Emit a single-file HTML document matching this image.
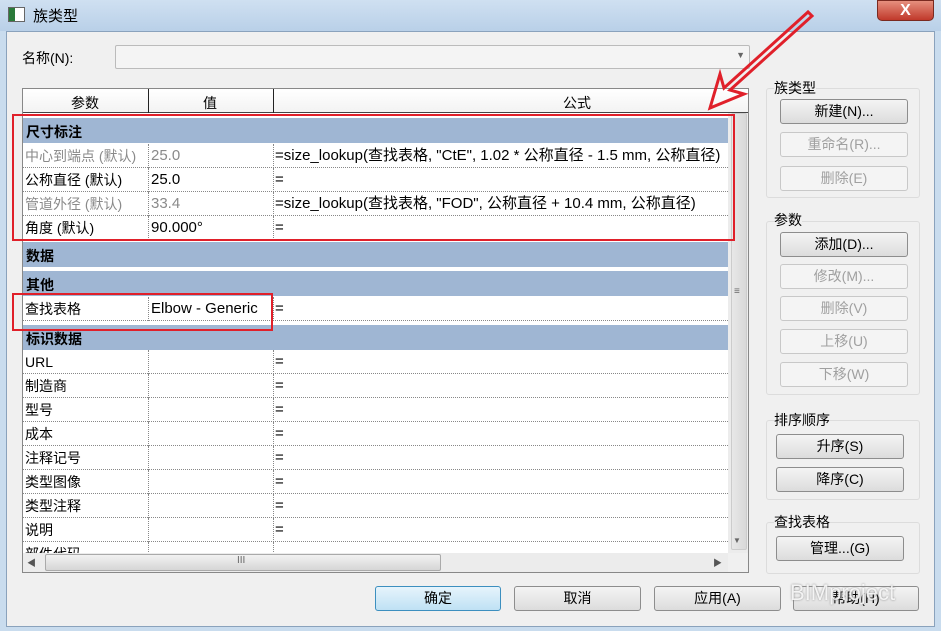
<!DOCTYPE html>
<html><head><meta charset="utf-8"><style>
*{box-sizing:border-box;margin:0;padding:0}
body{width:941px;height:631px;overflow:hidden;background:#c9dcee;font-family:"Liberation Sans","Noto Sans CJK SC",sans-serif;font-size:14px;color:#000;position:relative}
.a{position:absolute}
.title{left:0;top:0;width:941px;height:31px;background:linear-gradient(#cfe0f1,#b9d0e8)}
.body{left:6px;top:31px;width:929px;height:596px;background:#f0f0f0;border:1px solid #8aa2bc}
.btn{position:absolute;height:25px;border:1px solid #8d8d8d;border-radius:3px;background:linear-gradient(#f4f4f4,#dcdcdc);text-align:center;line-height:23px;font-size:14px}
.dis{color:#a0a0a0;border-color:#c8c8c8;background:#f4f4f4}
.grp{position:absolute;border:1px solid #dcdcdc;border-radius:3px}
.lbl{position:absolute;font-size:14px}
.row{position:absolute;left:23px;width:705px;height:24px;background:#fff;border-bottom:1px dotted #888}
.row span{position:absolute;top:2px;height:20px;line-height:20px;font-size:15px;white-space:nowrap;overflow:hidden}
.c1{left:2px;width:122px;font-size:14px!important}.c2{left:128px;width:122px}.c3{left:252px;width:452px}
.row i{position:absolute;top:0;height:24px;border-left:1px dotted #888}
.g{position:absolute;left:23px;width:705px;height:25px;background:#9fb6d3;font-weight:bold;padding:4px 3px;font-size:14px}
.gr{color:#8a8a8a}
</style></head><body>
<div class="a title"></div>
<div class="a" style="left:8px;top:7px;width:17px;height:15px;border:1px solid #666;background:linear-gradient(90deg,#2a7a3a 0 40%,#fff 40%)"></div>
<div class="a" style="left:33px;top:5px;font-size:15px">族类型</div>
<div class="a" style="left:877px;top:0;width:57px;height:21px;border-radius:0 0 5px 5px;background:linear-gradient(#e6907e,#c0392b);border:1px solid #7a2a20;color:#fff;text-align:center;font-weight:bold;font-size:16px;line-height:19px">X</div>
<div class="a body"></div>
<div class="lbl" style="left:22px;top:48px">名称(N):</div>
<div class="a" style="left:115px;top:45px;width:635px;height:24px;border:1px solid #bbb;border-radius:2px;background:#f4f4f4"><span style="position:absolute;right:4px;top:4px;font-size:9px;color:#666">▼</span></div>
<div class="a" style="left:22px;top:88px;width:727px;height:485px;border:1px solid #888;background:#f0f0f0"></div>
<div class="a" style="left:23px;top:89px;width:725px;height:24px;background:linear-gradient(#fff,#f3f3f3);border-bottom:1px solid #444"></div>
<div class="a" style="left:148px;top:89px;height:24px;border-left:1px solid #222"></div>
<div class="a" style="left:273px;top:89px;height:24px;border-left:1px solid #222"></div>
<div class="lbl" style="left:71px;top:93px">参数</div>
<div class="lbl" style="left:203px;top:93px">值</div>
<div class="lbl" style="left:563px;top:93px">公式</div>
<div class="a" style="left:23px;top:113px;width:705px;height:440px;background:#fff"></div>
<div class="g" style="top:118px">尺寸标注</div>
<div class="row" style="top:144px"><span class="c1 gr">中心到端点 (默认)</span><i style="left:125px"></i><span class="c2 gr">25.0</span><i style="left:250px"></i><span class="c3">=size_lookup(查找表格, "CtE", 1.02 * 公称直径 - 1.5 mm, 公称直径)</span></div>
<div class="row" style="top:168px"><span class="c1">公称直径 (默认)</span><i style="left:125px"></i><span class="c2">25.0</span><i style="left:250px"></i><span class="c3">=</span></div>
<div class="row" style="top:192px"><span class="c1 gr">管道外径 (默认)</span><i style="left:125px"></i><span class="c2 gr">33.4</span><i style="left:250px"></i><span class="c3">=size_lookup(查找表格, "FOD", 公称直径 + 10.4 mm, 公称直径)</span></div>
<div class="row" style="top:216px"><span class="c1">角度 (默认)</span><i style="left:125px"></i><span class="c2">90.000°</span><i style="left:250px"></i><span class="c3">=</span></div>
<div class="g" style="top:242px">数据</div>
<div class="g" style="top:271px">其他</div>
<div class="row" style="top:297px"><span class="c1">查找表格</span><i style="left:125px"></i><span class="c2">Elbow - Generic</span><i style="left:250px"></i><span class="c3">=</span></div>
<div class="g" style="top:325px">标识数据</div>
<div class="row" style="top:350px"><span class="c1">URL</span><i style="left:125px"></i><i style="left:250px"></i><span class="c3">=</span></div>
<div class="row" style="top:374px"><span class="c1">制造商</span><i style="left:125px"></i><i style="left:250px"></i><span class="c3">=</span></div>
<div class="row" style="top:398px"><span class="c1">型号</span><i style="left:125px"></i><i style="left:250px"></i><span class="c3">=</span></div>
<div class="row" style="top:422px"><span class="c1">成本</span><i style="left:125px"></i><i style="left:250px"></i><span class="c3">=</span></div>
<div class="row" style="top:446px"><span class="c1">注释记号</span><i style="left:125px"></i><i style="left:250px"></i><span class="c3">=</span></div>
<div class="row" style="top:470px"><span class="c1">类型图像</span><i style="left:125px"></i><i style="left:250px"></i><span class="c3">=</span></div>
<div class="row" style="top:494px"><span class="c1">类型注释</span><i style="left:125px"></i><i style="left:250px"></i><span class="c3">=</span></div>
<div class="row" style="top:518px"><span class="c1">说明</span><i style="left:125px"></i><i style="left:250px"></i><span class="c3">=</span></div>
<div class="row" style="top:542px;height:11px;overflow:hidden;border:none"><span class="c1">部件代码</span><i style="left:125px"></i><i style="left:250px"></i></div>
<div class="a" style="left:728px;top:113px;width:20px;height:440px;background:#ececec"></div>
<div class="a" style="left:731px;top:113px;width:16px;height:437px;background:linear-gradient(90deg,#e8e8e8,#d8d8d8);border:1px solid #ccc;border-radius:2px"></div>
<div class="a" style="left:734px;top:286px;font-size:10px;color:#666">≡</div>
<div class="a" style="left:733px;top:536px;font-size:8px;color:#666">▼</div>
<div class="a" style="left:23px;top:553px;width:705px;height:19px;background:#ececec"></div>
<div class="a" style="left:45px;top:554px;width:396px;height:17px;background:linear-gradient(#f2f2f2,#d6d6d6);border:1px solid #aaa;border-radius:2px"></div>
<div class="a" style="left:237px;top:555px;font-size:10px;color:#666">III</div>
<div class="a" style="left:27px;top:556px;font-size:9px;color:#555">◀</div>
<div class="a" style="left:713px;top:556px;font-size:9px;color:#555">▶</div>
<div class="grp" style="left:766px;top:88px;width:154px;height:110px"></div>
<div class="lbl" style="left:774px;top:78px;background:#f0f0f0">族类型</div>
<div class="btn" style="left:780px;top:99px;width:128px">新建(N)...</div>
<div class="btn dis" style="left:780px;top:132px;width:128px">重命名(R)...</div>
<div class="btn dis" style="left:780px;top:166px;width:128px">删除(E)</div>
<div class="grp" style="left:766px;top:221px;width:154px;height:174px"></div>
<div class="lbl" style="left:774px;top:210px;background:#f0f0f0">参数</div>
<div class="btn" style="left:780px;top:232px;width:128px">添加(D)...</div>
<div class="btn dis" style="left:780px;top:264px;width:128px">修改(M)...</div>
<div class="btn dis" style="left:780px;top:296px;width:128px">删除(V)</div>
<div class="btn dis" style="left:780px;top:329px;width:128px">上移(U)</div>
<div class="btn dis" style="left:780px;top:362px;width:128px">下移(W)</div>
<div class="grp" style="left:766px;top:420px;width:154px;height:80px"></div>
<div class="lbl" style="left:774px;top:410px;background:#f0f0f0">排序顺序</div>
<div class="btn" style="left:776px;top:434px;width:128px">升序(S)</div>
<div class="btn" style="left:776px;top:467px;width:128px">降序(C)</div>
<div class="grp" style="left:766px;top:522px;width:154px;height:52px"></div>
<div class="lbl" style="left:774px;top:512px;background:#f0f0f0">查找表格</div>
<div class="btn" style="left:776px;top:536px;width:128px">管理...(G)</div>
<div class="btn" style="left:375px;top:586px;width:126px;border-color:#3c8fbf;background:linear-gradient(#e6f4fc,#bfe1f4)">确定</div>
<div class="btn" style="left:514px;top:586px;width:127px">取消</div>
<div class="btn" style="left:654px;top:586px;width:127px">应用(A)</div>
<div class="btn" style="left:793px;top:586px;width:126px">帮助(H)</div>
<div class="a" style="left:790px;top:580px;font-size:22px;color:rgba(255,255,255,.85);text-shadow:0 0 2px #888">BIMproject</div>
<div class="a" style="left:12px;top:114px;width:723px;height:127px;border:2px solid #e0202a"></div>
<div class="a" style="left:12px;top:293px;width:261px;height:38px;border:2px solid #e0202a"></div>
<svg class="a" style="left:0;top:0" width="941" height="631"><path d="M808 12 L724 88 L720 74 L710 108 L744 94 L730 90 L812 16 Z" fill="none" stroke="#e0202a" stroke-width="3"/></svg>
</body></html>
